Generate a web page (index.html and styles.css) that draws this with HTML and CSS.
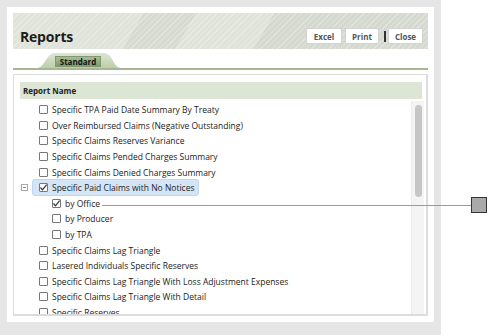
FILE: index.html
```html
<!DOCTYPE html>
<html lang="en">
<head>
    <meta charset="UTF-8">
    <title>Reports</title>
    <link rel="stylesheet" href="styles.css">
</head>
<body>

    <!-- window -->
    <div class="window">
        <header class="top">
            <h1 class="title">Reports</h1>
            <div class="actions">
                <button class="btn btn-excel">Excel</button>
                <button class="btn btn-print">Print</button>
                <span class="sep"></span>
                <button class="btn btn-close">Close</button>
            </div>
        </header>

        <!-- tabs -->
        <div class="tabs">
            <div class="tab">
                <svg class="tab-shape" width="84" height="15" viewBox="0 0 84 15">
                    <defs>
                        <linearGradient id="tabFill" x1="0" y1="0" x2="0" y2="1">
                            <stop offset="0" stop-color="#dde5d4"/>
                            <stop offset="1" stop-color="#bccdaa"/>
                        </linearGradient>
                    </defs>
                    <path d="M0 15 C8 15 9 0 18 0 H67 C76 0 76 15 84 15 Z" fill="url(#tabFill)"/>
                </svg>
                <span class="tab-label">Standard</span>
            </div>
        </div>

        <!-- report list -->
        <section class="panel">
            <div class="grid-head">Report Name</div>
            <div class="grid-body">
                <ul class="rows">
                    <li class="row"><span class="toggle"></span><span class="label"><span class="box"></span>Specific TPA Paid Date Summary By Treaty</span></li>
                    <li class="row"><span class="toggle"></span><span class="label"><span class="box"></span>Over Reimbursed Claims (Negative Outstanding)</span></li>
                    <li class="row"><span class="toggle"></span><span class="label"><span class="box"></span>Specific Claims Reserves Variance</span></li>
                    <li class="row"><span class="toggle"></span><span class="label"><span class="box"></span>Specific Claims Pended Charges Summary</span></li>
                    <li class="row"><span class="toggle"></span><span class="label"><span class="box"></span>Specific Claims Denied Charges Summary</span></li>
                    <li class="row"><span class="toggle minus"></span><span class="label selected"><span class="box checked"><svg width="9" height="9" viewBox="0 0 9 9"><path d="M1.5 4.5 L3.5 6.8 L7.6 1.6" fill="none" stroke="#333" stroke-width="1.2"/></svg></span>Specific Paid Claims with No Notices</span></li>
                    <li class="row sub"><span class="toggle"></span><span class="label"><span class="box checked"><svg width="9" height="9" viewBox="0 0 9 9"><path d="M1.5 4.5 L3.5 6.8 L7.6 1.6" fill="none" stroke="#333" stroke-width="1.2"/></svg></span>by Office</span></li>
                    <li class="row sub"><span class="toggle"></span><span class="label"><span class="box"></span>by Producer</span></li>
                    <li class="row sub"><span class="toggle"></span><span class="label"><span class="box"></span>by TPA</span></li>
                    <li class="row"><span class="toggle"></span><span class="label"><span class="box"></span>Specific Claims Lag Triangle</span></li>
                    <li class="row"><span class="toggle"></span><span class="label"><span class="box"></span>Lasered Individuals Specific Reserves</span></li>
                    <li class="row"><span class="toggle"></span><span class="label"><span class="box"></span>Specific Claims Lag Triangle With Loss Adjustment Expenses</span></li>
                    <li class="row"><span class="toggle"></span><span class="label"><span class="box"></span>Specific Claims Lag Triangle With Detail</span></li>
                    <li class="row"><span class="toggle"></span><span class="label"><span class="box"></span>Specific Reserves</span></li>
                </ul>
                <div class="scroll"><div class="thumb"></div></div>
            </div>
        </section>
    </div>

    <!-- callout -->
    <div class="callout-line"></div>
    <div class="callout-mark"></div>

</body>
</html>
```

FILE: styles.css
```css
body {
    margin: 0;
    background-color: white;
    font-family: 'Open Sans', 'DejaVu Sans', sans-serif;
    color: #222;
    position: relative;
    height: 336px;
    overflow: hidden;
}

.window {
    width: 441px;
    height: 335px;
    box-sizing: border-box;
    border-style: solid;
    border-color: #e6e6e6;
    border-width: 7px 7px 13px 7px;
    padding: 6px;
    background-color: white;
    display: flex;
    flex-direction: column;
}

/* header band */
.top {
    height: 36px;
    flex-shrink: 0;
    display: flex;
    justify-content: space-between;
    align-items: flex-start;
    padding: 0 5px 0 7px;
    background-color: #dfe3da;
    background-image:
        repeating-linear-gradient(135deg, rgba(255, 255, 255, 0.28) 0 1px, transparent 1px 4px),
        linear-gradient(120deg, transparent 0 30%, rgba(150, 160, 140, 0.12) 30% 42%, transparent 42% 60%, rgba(150, 160, 140, 0.14) 60% 100%);
}

.title {
    margin: 15px 0 0 0;
    font-size: 14px;
    line-height: 18px;
    font-weight: bold;
    color: #1c1c1c;
    letter-spacing: -0.2px;
}

.actions {
    display: flex;
    align-items: center;
    margin-top: 15px;
}

.btn {
    height: 16px;
    padding: 0;
    border: 1px solid #d2d2d2;
    border-radius: 2px;
    background-color: white;
    font-family: inherit;
    font-size: 8px;
    font-weight: bold;
    color: #555;
    cursor: pointer;
}

.btn-excel { width: 36px; margin-right: 3px; }
.btn-print { width: 34px; }
.btn-close { width: 35px; margin-left: 1px; }

.sep {
    width: 2px;
    height: 11px;
    background-color: #333;
    margin: 0 1px 0 5px;
}

/* tabs */
.tabs {
    height: 19px;
    flex-shrink: 0;
    display: flex;
    align-items: flex-end;
    border-bottom: 2px solid #a6b893;
    padding-left: 24px;
}

.tab {
    position: relative;
    width: 84px;
    height: 15px;
}

.tab-shape {
    display: block;
}

.tab-label {
    position: absolute;
    left: 18px;
    top: 3px;
    width: 46px;
    height: 11px;
    box-sizing: border-box;
    border: 1px solid #7e9870;
    background: linear-gradient(#a8bb99, #7f9a6c);
    font-size: 8px;
    line-height: 9px;
    font-weight: bold;
    text-align: center;
    color: #141414;
}

/* panel */
.panel {
    flex: 1;
    min-height: 0;
    margin-top: 4px;
    border: 1px solid #dcdcdc;
    border-right-width: 2px;
    border-bottom-width: 2px;
    padding: 7px 2px 0 6px;
    display: flex;
    flex-direction: column;
}

.grid-head {
    height: 17px;
    flex-shrink: 0;
    margin-right: 2px;
    padding-left: 3px;
    background-color: #dde6d5;
    font-size: 8px;
    line-height: 17px;
    font-weight: bold;
    color: #222;
}

.grid-body {
    flex: 1;
    min-height: 0;
    display: flex;
    overflow: hidden;
}

.rows {
    flex: 1;
    list-style: none;
    margin: 0;
    padding: 3px 0 0 0;
}

.row {
    height: 15.6px;
    display: flex;
    align-items: center;
    font-size: 8.5px;
    white-space: nowrap;
}

.toggle {
    width: 12px;
    flex-shrink: 0;
    display: flex;
    align-items: center;
}

.toggle.minus::before {
    content: "";
    width: 7px;
    height: 7px;
    box-sizing: border-box;
    border: 1px solid #aaa;
    margin-left: 1px;
    background: linear-gradient(#888, #888) center / 3px 1px no-repeat;
}

.label {
    display: flex;
    align-items: center;
    height: 15px;
    padding: 0 6px 0 7px;
    box-sizing: border-box;
}

.label.selected {
    background-color: #d5e5f8;
    border: 1px solid #c1d5ee;
    border-radius: 3px;
    height: 17px;
    padding: 0 3px 0 6px;
}

.sub .label {
    margin-left: 13px;
}

.box {
    width: 9px;
    height: 9px;
    box-sizing: border-box;
    border: 1px solid #777;
    border-radius: 1px;
    background-color: white;
    margin-right: 4px;
    flex-shrink: 0;
    position: relative;
}

.box svg {
    position: absolute;
    left: -1px;
    top: -1px;
}

/* scrollbar */
.scroll {
    width: 13px;
    flex-shrink: 0;
    background-color: #f4f4f4;
    border-left: 1px solid #ececec;
    box-sizing: border-box;
    padding: 4px 2px 0 3px;
    margin-top: 2px;
}

.thumb {
    height: 92px;
    border-radius: 4px;
    background-color: #c6c6c6;
}

/* callout */
.callout-line {
    position: absolute;
    left: 102px;
    top: 205px;
    width: 370px;
    height: 1px;
    background-color: #9a9a9a;
}

.callout-mark {
    position: absolute;
    left: 471px;
    top: 197px;
    width: 16px;
    height: 16px;
    box-sizing: border-box;
    border: 1px solid #333;
    background-color: #a9a9a9;
}
```
